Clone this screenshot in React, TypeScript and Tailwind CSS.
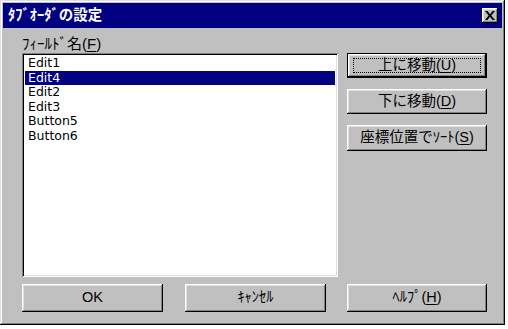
const font = "font-['Liberation_Sans','Noto_Sans_CJK_JP',sans-serif]";

const items = ['Edit1', 'Edit4', 'Edit2', 'Edit3', 'Button5', 'Button6'];

const raised =
  'shadow-[inset_-1px_-1px_#000,inset_1px_1px_#fff,inset_-2px_-2px_#808080,inset_2px_2px_#dfdfdf]';

const Mn = ({ c }: { c: string }) => <span className="underline underline-offset-2">{c}</span>;

const Btn = ({
  children,
  className = '',
  isDefault = false,
}: {
  children: React.ReactNode;
  className?: string;
  isDefault?: boolean;
}) => (
  <button
    className={
      isDefault
        ? `relative flex items-center justify-center bg-[#c0c0c0] text-[14.5px] text-black border border-black ${className}`
        : `flex items-center justify-center bg-[#c0c0c0] text-[14.5px] text-black ${raised} ${className}`
    }
  >
    {isDefault ? (
      <span className={`flex h-full w-full items-center justify-center ${raised}`}>
        <span className="flex h-[calc(100%-8px)] w-[calc(100%-10px)] items-center justify-center border border-dotted border-black">
          {children}
        </span>
      </span>
    ) : (
      children
    )}
  </button>
);

export default function App() {
  return (
    <div className={`h-[329px] w-[508px] bg-white ${font}`}>
      <div className="flex h-[325px] w-[505px] flex-col bg-[#c0c0c0] p-[3px] shadow-[inset_-1px_-1px_#000,inset_1px_1px_#dfdfdf,inset_-2px_-2px_#808080,inset_2px_2px_#fff]">
        {/* タイトルバー */}
        <div className="flex h-[25px] items-center justify-between bg-[#000080] pl-[5px] pr-[4px]">
          <span className="text-[14.5px] font-bold leading-none text-white">ﾀﾌﾞｵｰﾀﾞの設定</span>
          <button className={`flex h-[15px] w-[16px] items-center justify-center bg-[#c0c0c0] ${raised}`}>
            <svg width="10" height="9" viewBox="0 0 10 9">
              <path d="M0 0h2.5l2.5 3.2 2.5-3.2H10L6.3 4.5 10 9H7.5L5 5.8 2.5 9H0l3.7-4.5z" fill="#000" />
            </svg>
          </button>
        </div>

        <div className="flex flex-1 flex-col pl-[19px] pt-[8px]">
          <div className="flex">
            <div className="flex w-[316px] flex-col">
              <div className="h-[17px] text-[15px] leading-[16px] text-black">
                ﾌｨｰﾙﾄﾞ名(<Mn c="F" />)
              </div>
              <div className="h-[224px] bg-white px-[3px] py-[3px] shadow-[inset_1px_1px_#808080,inset_-1px_-1px_#fff,inset_2px_2px_#000,inset_-2px_-2px_#dfdfdf]">
                {items.map((it) => (
                  <div
                    key={it}
                    className={`h-[14.5px] pl-[3px] font-['DejaVu_Sans',sans-serif] text-[12.5px] leading-[14.5px] ${
                      it === 'Edit4' ? 'bg-[#000080] text-white' : 'text-black'
                    }`}
                  >
                    {it}
                  </div>
                ))}
              </div>
            </div>

            <div className="ml-[9px] flex flex-col gap-[11px] pt-[17px]">
              <Btn isDefault className="h-[25px] w-[140px]">
                上に移動(<Mn c="U" />)
              </Btn>
              <Btn className="h-[25px] w-[140px]">
                下に移動(<Mn c="D" />)
              </Btn>
              <Btn className="h-[26px] w-[140px]">
                座標位置でｿｰﾄ(<Mn c="S" />)
              </Btn>
            </div>
          </div>

          <div className="mt-[7px] flex">
            <Btn className="h-[28px] w-[141px]">OK</Btn>
            <Btn className="ml-[22px] h-[28px] w-[141px]">ｷｬﾝｾﾙ</Btn>
            <Btn className="ml-[21px] h-[28px] w-[140px]">
              ﾍﾙﾌﾟ(<Mn c="H" />)
            </Btn>
          </div>
        </div>
      </div>
    </div>
  );
}
